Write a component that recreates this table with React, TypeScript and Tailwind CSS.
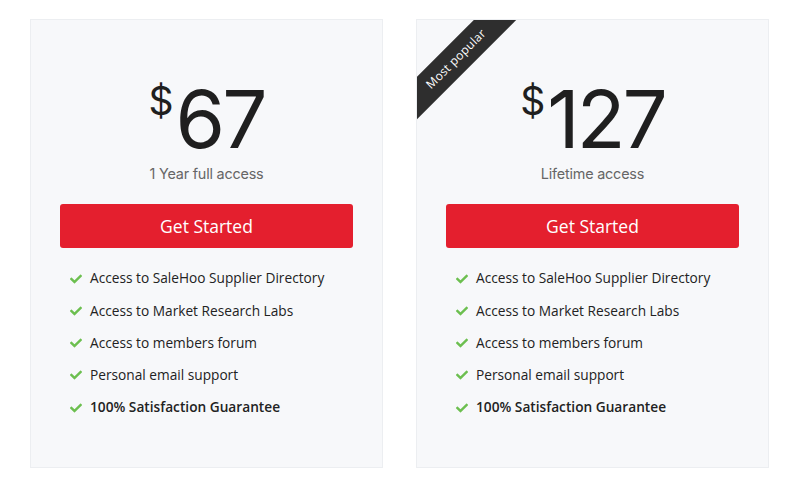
import { FaCheck } from "react-icons/fa";

type Plan = {
  price: string;
  period: string;
  popular?: boolean;
};

const plans: Plan[] = [
  { price: "67", period: "1 Year full access" },
  { price: "127", period: "Lifetime access", popular: true },
];

const features = [
  "Access to SaleHoo Supplier Directory",
  "Access to Market Research Labs",
  "Access to members forum",
  "Personal email support",
];

const PlanCard: React.FC<{ plan: Plan }> = ({ plan }) => {
  return (
    <div className="relative w-[353px] h-[449px] bg-[#f7f8fa] border border-[#eceef1] flex flex-col items-center px-[29px] pt-[67px]">
      {plan.popular && (
        <div className="absolute left-0 top-0 w-[110px] h-[110px] overflow-hidden">
          <div className="absolute left-[-46px] top-[24px] w-[170px] h-[30px] bg-[#2e2e2e] -rotate-45 flex items-center justify-center">
            <span className="text-white text-[12px] tracking-[0.3px] font-['Open_Sans',sans-serif]">Most popular</span>
          </div>
        </div>
      )}
      <div className="flex items-start justify-center text-[#1f1f1f] font-['Inter',sans-serif]">
        <span className="text-[39px] leading-none mt-[-6px] mr-[2px]">$</span>
        <span className="text-[80px] leading-[64px] tracking-[-3px]">{plan.price}</span>
      </div>
      <p className="mt-[14px] text-[14.4px] leading-[18px] text-[#666] font-['Inter',sans-serif] tracking-[-0.2px]">{plan.period}</p>
      <button className="mt-[21px] w-full h-[44px] rounded-[3px] bg-[#e41f2e] text-white text-[17.5px] font-['Open_Sans',sans-serif]">
        Get Started
      </button>
      <ul className="mt-[21px] w-full pl-[10px] flex flex-col gap-[13.3px] font-['Open_Sans',sans-serif] text-[13.7px] text-[#222]">
        {features.map((f) => (
          <li key={f} className="flex items-center h-[19px]">
            <FaCheck className="text-[#6cbf4f] w-[12px] h-[12px] mr-[8px]" />
            {f}
          </li>
        ))}
        <li className="flex items-center h-[19px] font-semibold">
          <FaCheck className="text-[#6cbf4f] w-[12px] h-[12px] mr-[8px]" />
          100% Satisfaction Guarantee
        </li>
      </ul>
    </div>
  );
};

export default function App() {
  return (
    <div className="w-[800px] h-[487px] bg-white flex gap-[33px] pl-[30px] pt-[19px]">
      {plans.map((p) => (
        <PlanCard key={p.price} plan={p} />
      ))}
    </div>
  );
}
